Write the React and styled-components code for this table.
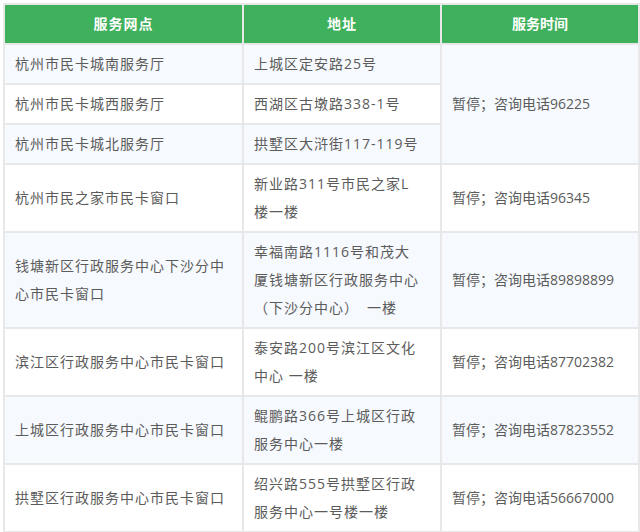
import React from "react";
import styled, { createGlobalStyle } from "styled-components";

const GlobalStyle = createGlobalStyle`
  html, body {
    margin: 0;
    padding: 0;
    background: #fff;
  }
  body {
    font-family: "Open Sans", "Noto Sans CJK SC", sans-serif;
  }
`;

const Page = styled.div`
  padding: 3px 2px 0 3px;
  width: 640px;
  height: 532px;
  box-sizing: border-box;
  overflow: hidden;
`;

const Table = styled.table`
  width: 635px;
  border-collapse: collapse;
  table-layout: fixed;
  font-size: 14px;
  line-height: 28px;
  color: #5b5b5b;
`;

const Head = styled.th`
  background: #3fb05b;
  color: #fff;
  font-weight: bold;
  height: 28px;
  padding: 5px 10px;
  border: 2px solid #e8e8e8;
  text-align: center;
  letter-spacing: ${(p) => (p.$tight ? "0" : "1px")};
`;

const Row = styled.tr`
  background: ${(p) => (p.$alt ? "#f6f9fe" : "#fff")};
`;

const Cell = styled.td`
  height: 28px;
  padding: 5px ${(p) => (p.$wide ? "12px" : "18px")} 5px 10px;
  border: 2px solid #e8e8e8;
  vertical-align: middle;
  letter-spacing: ${(p) => (p.$tight ? "0" : "1px")};
  word-break: break-all;
`;

const rows = [
  { name: "杭州市民卡城南服务厅", addr: "上城区定安路25号", time: "暂停；咨询电话96225", span: 3 },
  { name: "杭州市民卡城西服务厅", addr: "西湖区古墩路338-1号" },
  { name: "杭州市民卡城北服务厅", addr: "拱墅区大浒街117-119号" },
  { name: "杭州市民之家市民卡窗口", addr: "新业路311号市民之家L楼一楼", time: "暂停；咨询电话96345" },
  {
    name: "钱塘新区行政服务中心下沙分中心市民卡窗口",
    addr: "幸福南路1116号和茂大厦钱塘新区行政服务中心（下沙分中心）　一楼",
    time: "暂停；咨询电话89898899",
  },
  { name: "滨江区行政服务中心市民卡窗口", addr: "泰安路200号滨江区文化中心 一楼", time: "暂停；咨询电话87702382" },
  { name: "上城区行政服务中心市民卡窗口", addr: "鲲鹏路366号上城区行政服务中心一楼", time: "暂停；咨询电话87823552" },
  { name: "拱墅区行政服务中心市民卡窗口", addr: "绍兴路555号拱墅区行政服务中心一号楼一楼", time: "暂停；咨询电话56667000" },
];

export default function App() {
  return (
    <Page>
      <GlobalStyle />
      <Table>
        <colgroup>
          <col style={{ width: 239 }} />
          <col style={{ width: 198 }} />
          <col style={{ width: 198 }} />
        </colgroup>
        <thead>
          <tr>
            <Head>服务网点</Head>
            <Head>地址</Head>
            <Head $tight>服务时间</Head>
          </tr>
        </thead>
        <tbody>
          {rows.map((r, i) => (
            <Row key={r.name} $alt={i % 2 === 0}>
              <Cell $wide>{r.name}</Cell>
              <Cell>{r.addr}</Cell>
              {r.time && (
                <Cell $tight rowSpan={r.span || 1}>
                  {r.time}
                </Cell>
              )}
            </Row>
          ))}
          <Row $alt>
            <Cell $wide />
            <Cell />
            <Cell $tight />
          </Row>
        </tbody>
      </Table>
    </Page>
  );
}
